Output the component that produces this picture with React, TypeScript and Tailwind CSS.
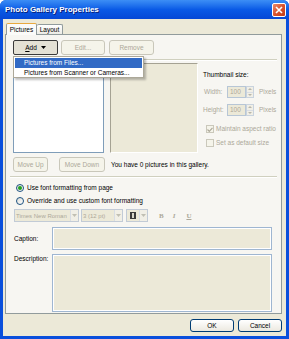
import React from "react";

const DropArrow = ({ color = "#000" }: { color?: string }) => (
  <svg width="5" height="3" viewBox="0 0 5 3">
    <path d="M0 0h5L2.5 3z" fill={color} />
  </svg>
);

const XpButton = ({
  label,
  w,
  disabled,
  className = "",
}: {
  label: React.ReactNode;
  w: string;
  disabled?: boolean;
  className?: string;
}) => (
  <div
    className={`${w} h-full flex items-center justify-center rounded-[3px] border ${
      disabled
        ? "border-[#c9c7ba] bg-[#f5f4ea] text-[#aca899]"
        : "border-[#003c74] bg-gradient-to-b from-white to-[#ece9e0] text-black"
    } ${className}`}
  >
    {label}
  </div>
);

const Spinner = () => (
  <div className="w-[8px] h-[12px] flex flex-col border border-[#c9d3de] bg-[#f1efe6]">
    <div className="flex-1 flex items-center justify-center border-b border-[#d9dde3]">
      <svg width="4" height="2" viewBox="0 0 4 2">
        <path d="M0 2h4L2 0z" fill="#b8b6aa" />
      </svg>
    </div>
    <div className="flex-1 flex items-center justify-center">
      <svg width="4" height="2" viewBox="0 0 4 2">
        <path d="M0 0h4L2 2z" fill="#b8b6aa" />
      </svg>
    </div>
  </div>
);

const DisabledCheck = ({ checked, label }: { checked?: boolean; label: string }) => (
  <div className="flex items-center h-[8px] pl-[3px]">
    <div className="w-[8px] h-[8px] border border-[#cac8bb] bg-[#f5f4ea] flex items-center justify-center">
      {checked && (
        <svg width="6" height="5" viewBox="0 0 6 5">
          <path d="M0.5 2.5l1.8 1.8L5.5 0.8" stroke="#aca899" strokeWidth="1.2" fill="none" />
        </svg>
      )}
    </div>
    <span className="ml-[2px] text-[#aca899]">{label}</span>
  </div>
);

const Radio = ({ checked, label }: { checked?: boolean; label: string }) => (
  <div className="flex items-center h-[9px] pl-[3px]">
    <div className="w-[8px] h-[8px] rounded-full border border-[#1c5180] bg-gradient-to-br from-[#dcdcd6] to-white flex items-center justify-center">
      {checked && <div className="w-[4px] h-[4px] rounded-full bg-[#21a121]" />}
    </div>
    <span className="ml-[3px]">{label}</span>
  </div>
);

const SelectBox = ({ w, text }: { w: string; text: string }) => (
  <div className={`${w} h-full flex items-center border border-[#c2cbd6] bg-[#ece9d8]`}>
    <span className="flex-1 pl-[1px] text-[6px] text-[#aca899] whitespace-nowrap overflow-hidden">{text}</span>
    <div className="w-[8px] h-full flex items-center justify-center border-l border-[#d8dde4] bg-[#f1efe6]">
      <DropArrow color="#c1bfb3" />
    </div>
  </div>
);

export default function App() {
  return (
    <div className="w-[289px] h-[339px] flex flex-col overflow-hidden rounded-t-[6px] bg-[#0a4fdc] font-['Liberation_Sans',Arial,sans-serif] text-[6.5px] leading-[8px] text-black">
      {/* Title bar */}
      <div className="h-[19px] shrink-0 flex items-center pl-[5px] pr-[3px] bg-gradient-to-b from-[#3c8ef5] via-[#0a5ae6] to-[#0648d6]">
        <span className="flex-1 text-white font-bold text-[8px] leading-[10px] [text-shadow:1px_1px_0_#0a1e78]">
          Photo Gallery Properties
        </span>
        <div className="w-[14px] h-[14px] rounded-[2px] border border-white bg-gradient-to-br from-[#e88a6c] via-[#d9532d] to-[#c23a15] flex items-center justify-center">
          <svg width="8" height="8" viewBox="0 0 8 8">
            <path d="M1 1l6 6M7 1l-6 6" stroke="#fff" strokeWidth="1.6" />
          </svg>
        </div>
      </div>

      {/* Window body */}
      <div className="flex-1 mx-[3px] mb-[3px] bg-[#ece9d8] pt-[4px] pl-[2px] pr-[4px] pb-[4px] flex flex-col">
        {/* Tabs */}
        <div className="flex items-end h-[11px] shrink-0">
          <div className="relative z-10 -mb-px ml-[1px] w-[31px] h-[12px] flex items-center justify-center border border-b-0 border-[#919b9c] border-t-[#e9a93e] rounded-t-[2px] bg-[#fbfbf9]">
            Pictures
          </div>
          <div className="w-[26px] h-[10px] flex items-center justify-center border border-b-0 border-l-0 border-[#919b9c] rounded-t-[2px] bg-gradient-to-b from-white to-[#ecebe5]">
            Layout
          </div>
        </div>

        {/* Tab panel */}
        <div className="h-[280px] shrink-0 border border-[#919b9c] bg-[#f7f6f2] pl-[7px] pr-[4px] pt-[5px] flex flex-col">
          {/* Add / Edit / Remove */}
          <div className="relative flex h-[15px] shrink-0">
            <div className="w-[45px] h-full flex items-center justify-center gap-[4px] rounded-[2px] border border-[#3a3a3a] bg-[#e4e1d5]">
              <span>
                <span className="underline">A</span>dd
              </span>
              <DropArrow />
            </div>
            <XpButton label="Edit..." w="w-[44px]" disabled className="ml-[3px]" />
            <XpButton label="Remove" w="w-[45px]" disabled className="ml-[4px]" />

            {/* Add menu */}
            <div className="absolute left-0 top-[16px] z-20 w-[131px] h-[22px] border border-[#aca899] bg-white p-px shadow-[2px_2px_2px_rgba(0,0,0,0.25)]">
              <div className="h-[10px] flex items-center pl-[9px] bg-[#316ac5] text-white">
                Pictures from Files...
              </div>
              <div className="h-[10px] flex items-center pl-[9px]">Pictures from Scanner or Cameras...</div>
            </div>
          </div>

          <div className="mt-[4px] h-[2px] shrink-0 border-t border-[#d0d0bf] border-b border-b-white" />

          {/* List, preview, thumbnail size */}
          <div className="mt-[2px] flex h-[90px] shrink-0">
            <div className="w-[91px] h-full border border-[#7f9db9] bg-white" />
            <div className="ml-[6px] w-[88px] h-full border border-[#a5a293] border-r-white border-b-white bg-[#ece9d8]" />
            <div className="ml-[5px] flex flex-col">
              <div className="mt-[8px]">Thumbnail size:</div>
              <div className="mt-[7px] flex items-center h-[12px]">
                <span className="w-[24px] pl-[1px] text-[#aca899]">Width:</span>
                <div className="w-[19px] h-[12px] flex items-center pl-[2px] border border-[#b7c6d6] bg-[#ece9d8] text-[#aca899]">
                  100
                </div>
                <Spinner />
                <span className="ml-[5px] text-[#aca899]">Pixels</span>
              </div>
              <div className="mt-[6px] flex items-center h-[12px]">
                <span className="w-[24px] text-[#aca899]">Height:</span>
                <div className="w-[19px] h-[12px] flex items-center pl-[2px] border border-[#b7c6d6] bg-[#ece9d8] text-[#aca899]">
                  100
                </div>
                <Spinner />
                <span className="ml-[5px] text-[#aca899]">Pixels</span>
              </div>
              <div className="mt-[9px]">
                <DisabledCheck checked label="Maintain aspect ratio" />
              </div>
              <div className="mt-[6px]">
                <DisabledCheck label="Set as default size" />
              </div>
            </div>
          </div>

          {/* Move buttons */}
          <div className="mt-[4px] flex items-center h-[15px] shrink-0">
            <XpButton label="Move Up" w="w-[35px]" disabled />
            <XpButton label="Move Down" w="w-[46px]" disabled className="ml-[11px]" />
            <span className="ml-[6px]">You have 0 pictures in this gallery.</span>
          </div>

          <div className="mt-[4px] -ml-[3px] h-[2px] shrink-0 border-t border-[#d0d0bf] border-b border-b-white" />

          {/* Font formatting */}
          <div className="mt-[5px]">
            <Radio checked label="Use font formatting from page" />
          </div>
          <div className="mt-[4px]">
            <Radio label="Override and use custom font formatting" />
          </div>

          <div className="mt-[4px] flex items-center h-[13px] shrink-0">
            <SelectBox w="ml-[1px] w-[65px]" text="Times New Roman" />
            <SelectBox w="ml-[2px] w-[42px]" text="3 (12 pt)" />
            <div className="ml-[3px] w-[22px] h-full flex items-center border border-[#c2cbd6] bg-[#ece9d8]">
              <div className="flex-1 flex items-center justify-center">
                <div className="w-[6px] h-[7px] bg-[#3a3a3a] border-x-[2px] border-[#3a3a3a] flex items-center justify-center">
                  <div className="w-[2px] h-[5px] bg-[#d8d6ca]" />
                </div>
              </div>
              <div className="w-[8px] h-full flex items-center justify-center border-l border-[#d8dde4] bg-[#f1efe6]">
                <DropArrow color="#c1bfb3" />
              </div>
            </div>
            <span className="ml-[11px] font-['Liberation_Serif',serif] font-bold text-[7px] text-[#aca899]">B</span>
            <span className="ml-[9px] font-['Liberation_Serif',serif] italic font-bold text-[7px] text-[#aca899]">I</span>
            <span className="ml-[11px] font-['Liberation_Serif',serif] underline font-bold text-[7px] text-[#aca899]">U</span>
          </div>

          {/* Caption */}
          <div className="mt-[5px] flex h-[23px] shrink-0">
            <span className="w-[39px] pl-[1px] self-center">Caption:</span>
            <div className="flex-1 mr-[5px] border border-[#9fb6d1] bg-[#ece9d8] shadow-[inset_0_0_0_1px_#fff]" />
          </div>

          {/* Description */}
          <div className="mt-[4px] flex h-[58px] shrink-0">
            <span className="w-[39px] pl-[1px] mt-[1px]">Description:</span>
            <div className="flex-1 mr-[5px] border border-[#9fb6d1] bg-[#ece9d8] shadow-[inset_0_0_0_1px_#fff]" />
          </div>
        </div>

        {/* Footer */}
        <div className="pt-[5px] flex justify-end h-[18px] shrink-0">
          <XpButton label="OK" w="w-[44px]" />
          <XpButton label="Cancel" w="w-[44px]" className="ml-[4px]" />
        </div>
      </div>
    </div>
  );
}
